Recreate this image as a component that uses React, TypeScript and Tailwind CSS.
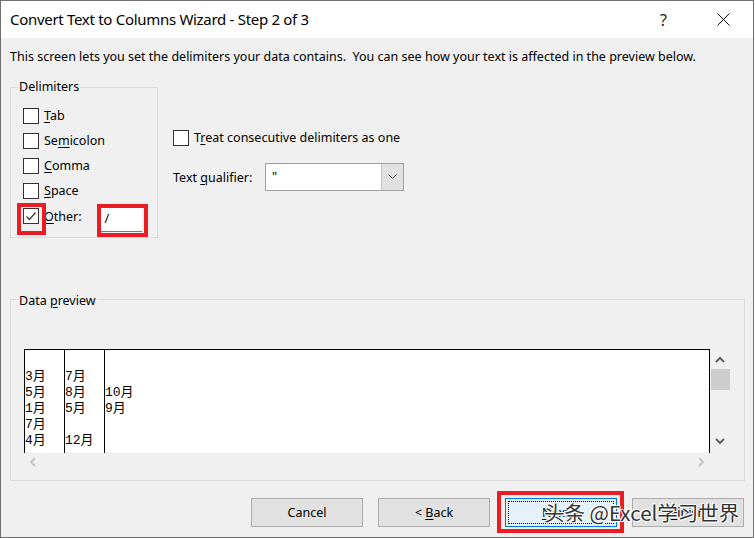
import React from "react";

const ui = "font-['Noto_Sans',sans-serif]";

const Check = ({ checked = false }: { checked?: boolean }) => (
  <span className="w-[16px] h-[16px] border border-[#333333] bg-white flex items-center justify-center shrink-0">
    {checked && (
      <svg width="12" height="12" viewBox="0 0 12 12">
        <path d="M1.5 6.5 L4.5 9.5 L10.5 2.5" stroke="#3c3c3c" strokeWidth="1.3" fill="none" />
      </svg>
    )}
  </span>
);

const Key = ({ children }: { children: React.ReactNode }) => (
  <span className="underline decoration-1 underline-offset-[2px]">{children}</span>
);

const Chevron = ({ dir, color }: { dir: "up" | "down" | "left" | "right"; color: string }) => {
  const d = {
    up: "M1 6 L5 2 L9 6",
    down: "M1 2 L5 6 L9 2",
    left: "M6 1 L2 5 L6 9",
    right: "M2 1 L6 5 L2 9",
  }[dir];
  const horizontal = dir === "up" || dir === "down";
  return (
    <svg width={horizontal ? 10 : 8} height={horizontal ? 8 : 10} viewBox={horizontal ? "0 0 10 8" : "0 0 8 10"}>
      <path d={d} stroke={color} strokeWidth="2" fill="none" />
    </svg>
  );
};

const rows: [string, string, string][] = [
  ["", "", ""],
  ["3月", "7月", ""],
  ["5月", "8月", "10月"],
  ["1月", "5月", "9月"],
  ["7月", "", ""],
  ["4月", "12月", ""],
];

export default function App() {
  const delimiters: React.ReactNode[] = [
    <><Key>T</Key>ab</>,
    <>Se<Key>m</Key>icolon</>,
    <><Key>C</Key>omma</>,
    <><Key>S</Key>pace</>,
  ];

  return (
    <div className={`relative w-[754px] h-[538px] border border-[#6f6f6f] flex flex-col text-[12.5px] text-black ${ui}`}>
      {/* title bar */}
      <div className="h-[37px] bg-white flex items-center shrink-0">
        <span className="ml-[9px] text-[15px] tracking-[-0.3px]">Convert Text to Columns Wizard - Step 2 of 3</span>
        <span className="ml-auto mr-[50px] text-[16px] text-[#222]">?</span>
        <svg width="13" height="13" viewBox="0 0 13 13" className="mr-[23px]">
          <path d="M0.5 0.5 L12.5 12.5 M12.5 0.5 L0.5 12.5" stroke="#111" strokeWidth="1" />
        </svg>
      </div>

      {/* body */}
      <div className="flex-1 bg-[#f0f0f0] flex flex-col">
        <p className="pt-[11px] pl-[9px] leading-[16px]">
          This screen lets you set the delimiters your data contains.&nbsp; You can see how your text is affected in the preview below.
        </p>

        <div className="flex mt-[22px]">
          {/* Delimiters group */}
          <div className="ml-[9px] w-[148px] h-[151px] border border-[#dcdcdc]">
            <div className="-mt-[9px] ml-[7px] w-fit px-[1px] bg-[#f0f0f0] leading-[16px]">Delimiters</div>
            <div className="mt-[8px] pl-[12px] flex flex-col">
              {delimiters.map((label, i) => (
                <div key={i} className="h-[25px] flex items-center gap-[5px]">
                  <Check />
                  <span className="pt-[2px]">{label}</span>
                </div>
              ))}
              <div className="h-[25px] flex items-center gap-[5px]">
                <Check checked />
                <span className="pt-[4px]"><Key>O</Key>ther:</span>
                <div className="ml-[13px] mt-[8px] w-[42px] h-[24px] bg-white border-b border-[#7a7a7a] flex items-center pl-[5px]">/</div>
              </div>
            </div>
          </div>

          {/* right column */}
          <div className="ml-[15px] pt-[38px] flex flex-col">
            <div className="h-[25px] flex items-center gap-[5px]">
              <Check />
              <span className="pt-[2px]">T<Key>r</Key>eat consecutive delimiters as one</span>
            </div>
            <div className="mt-[13px] h-[28px] flex items-center">
              <span className="w-[92px] pt-[2px]">Text <Key>q</Key>ualifier:</span>
              <div className="w-[139px] h-[28px] bg-white border border-[#a0a0a0] flex">
                <span className="flex-1 pl-[6px] leading-[26px]">"</span>
                <span className="w-[22px] bg-[#e1e1e1] border-l border-[#c5c5c5] flex items-center justify-center">
                  <svg width="9" height="6" viewBox="0 0 9 6">
                    <path d="M0.5 0.5 L4.5 4.5 L8.5 0.5" stroke="#555" strokeWidth="1" fill="none" />
                  </svg>
                </span>
              </div>
            </div>
          </div>
        </div>

        {/* Data preview group */}
        <div className="ml-[9px] mt-[61px] w-[735px] h-[182px] border border-[#dcdcdc]">
          <div className="-mt-[9px] ml-[7px] w-fit px-[1px] bg-[#f0f0f0] leading-[16px] pt-[2px]">
            Data <Key>p</Key>review
          </div>
          <div className="mt-[40px] ml-[13px] w-[706px] h-[121px] flex">
            <div className="w-[686px] flex flex-col">
              <div className="h-[104px] bg-white border-t border-l border-r border-black flex overflow-hidden font-['Liberation_Mono','Noto_Sans_CJK_SC',monospace] text-[13px]">
                {[0, 1, 2].map((c) => (
                  <div key={c} className={c < 2 ? "w-[40px] border-r border-black pt-[3px]" : "flex-1 pt-[3px]"}>
                    {rows.map((r, i) => (
                      <div key={i} className="h-[16px] leading-[16px] whitespace-nowrap">{r[c]}</div>
                    ))}
                  </div>
                ))}
              </div>
              <div className="h-[17px] flex items-center justify-between px-[5px]">
                <Chevron dir="left" color="#c4c4c4" />
                <Chevron dir="right" color="#c4c4c4" />
              </div>
            </div>
            <div className="w-[20px] h-[104px] flex flex-col items-center">
              <div className="h-[20px] flex items-center pt-[2px]">
                <Chevron dir="up" color="#606060" />
              </div>
              <div className="w-[19px] h-[21px] bg-[#cdcdcd] ml-[1px]" />
              <div className="mt-auto h-[20px] flex items-center pb-[4px]">
                <Chevron dir="down" color="#606060" />
              </div>
            </div>
          </div>
        </div>

        {/* buttons */}
        <div className="mt-[17px] flex justify-end gap-[15px] pr-[9px]">
          <button className="w-[112px] h-[29px] pt-[2px] bg-[#e1e1e1] border border-[#adadad]">Cancel</button>
          <button className="w-[112px] h-[29px] pt-[2px] bg-[#e1e1e1] border border-[#adadad]">
            &lt; <Key>B</Key>ack
          </button>
          <button className="w-[112px] h-[29px] bg-[#e5f1fb] border border-[#0078d7] p-[2px]">
            <span className="w-full h-full pt-[2px] border border-dotted border-black flex items-center justify-center">
              <Key>N</Key>ext &gt;
            </span>
          </button>
          <button className="w-[112px] h-[29px] pt-[2px] bg-[#e1e1e1] border border-[#adadad]">
            <Key>F</Key>inish
          </button>
        </div>
      </div>

      {/* red annotations */}
      <div className="absolute left-[16px] top-[202px] w-[29px] h-[32px] border-[4px] border-[#ec1c24]" />
      <div className="absolute left-[96px] top-[203px] w-[51px] h-[33px] border-[4px] border-[#ec1c24]" />
      <div className="absolute left-[496px] top-[490px] w-[127px] h-[42px] border-[4px] border-[#ec1c24]" />

      {/* watermark */}
      <div className="absolute left-[543px] top-[497px] text-[20.5px] leading-[28px] text-[#333] font-['Noto_Sans_CJK_SC',sans-serif] [text-shadow:1px_0_0_#fff,-1px_0_0_#fff,0_1px_0_#fff,0_-1px_0_#fff,1px_1px_0_#fff,-1px_-1px_0_#fff]">
        头条 @Excel学习世界
      </div>
    </div>
  );
}
